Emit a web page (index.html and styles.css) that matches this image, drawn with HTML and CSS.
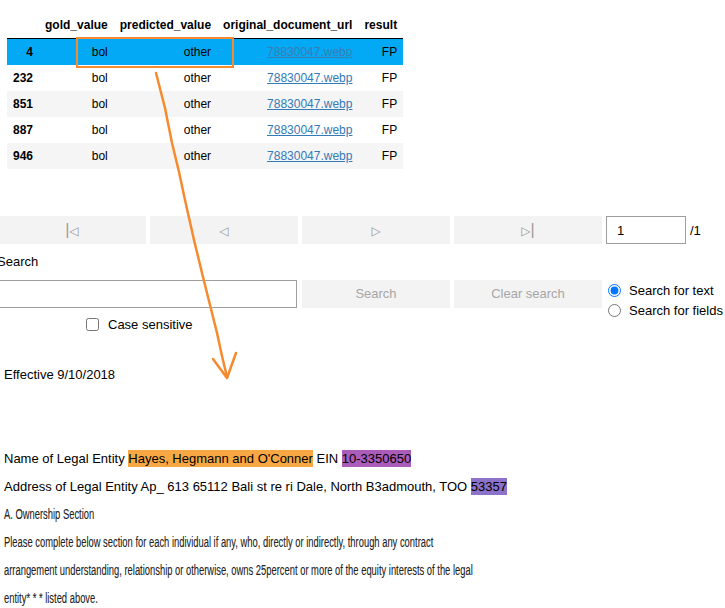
FILE: index.html
```html
<!DOCTYPE html>
<html lang="en">
<head>
    <meta charset="UTF-8">
    <title>Review results</title>
    <link rel="stylesheet" href="styles.css">
</head>
<body>
<div class="page">

    <!-- results table -->
    <table class="results">
        <thead>
        <tr><th></th><th>gold_value</th><th>predicted_value</th><th>original_document_url</th><th>result</th></tr>
        </thead>
        <tbody>
        <tr class="selected"><th>4</th><td>bol</td><td>other</td><td><a href="#">78830047.webp</a></td><td>FP</td></tr>
        <tr><th>232</th><td>bol</td><td>other</td><td><a href="#">78830047.webp</a></td><td>FP</td></tr>
        <tr><th>851</th><td>bol</td><td>other</td><td><a href="#">78830047.webp</a></td><td>FP</td></tr>
        <tr><th>887</th><td>bol</td><td>other</td><td><a href="#">78830047.webp</a></td><td>FP</td></tr>
        <tr><th>946</th><td>bol</td><td>other</td><td><a href="#">78830047.webp</a></td><td>FP</td></tr>
        </tbody>
    </table>

    <!-- paging -->
    <div class="pager">
        <button class="btn" disabled><span class="bar">|</span><span class="tri">&#9665;</span></button>
        <button class="btn" disabled><span class="tri">&#9665;</span></button>
        <button class="btn" disabled><span class="tri">&#9655;</span></button>
        <button class="btn" disabled><span class="tri">&#9655;</span><span class="bar">|</span></button>
        <input class="page-input" type="text" value="1">
        <span class="page-total">/1</span>
    </div>

    <!-- search -->
    <div class="search-label">Search</div>
    <div class="search-row">
        <input class="search-input" type="text">
        <button class="btn" disabled>Search</button>
        <button class="btn" disabled>Clear search</button>
        <div class="mode">
            <label><input type="radio" name="mode" checked>Search for text</label>
            <label><input type="radio" name="mode">Search for fields</label>
        </div>
    </div>
    <div class="case-row">
        <label><input type="checkbox">Case sensitive</label>
    </div>

    <!-- document text -->
    <div class="doc">
        <div class="line">Effective 9/10/2018</div>
        <div class="line"></div>
        <div class="line"></div>
        <div class="line">Name of Legal Entity <span class="hl hl-name">Hayes, Hegmann and O'Conner</span> EIN <span class="hl hl-ein">10-3350650</span></div>
        <div class="line">Address of Legal Entity Ap_ 613 65112 Bali st re ri Dale, North B3admouth, TOO <span class="hl hl-zip">53357</span></div>
        <div class="line"><span class="narrow">A. Ownership Section</span></div>
        <div class="line"><span class="narrow">Please complete below section for each individual if any, who, directly or indirectly, through any contract</span></div>
        <div class="line"><span class="narrow">arrangement understanding, relationship or otherwise, owns 25percent or more of the equity interests of the legal</span></div>
        <div class="line"><span class="narrow">entity* * * listed above.</span></div>
    </div>

    <!-- hand drawn annotation -->
    <svg class="annot" width="725" height="608" viewBox="0 0 725 608">
        <rect x="77" y="38" width="156" height="29" fill="none" stroke="#f68a2e" stroke-width="2"/>
        <polyline points="156,73 165,108 172,143 179,172 185,200 194,240 203,277 210,305 217,333 222,356 227,377"
                  fill="none" stroke="#f68a2e" stroke-width="2.5" stroke-linecap="round" stroke-linejoin="round"/>
        <polyline points="213,359 227,378 236,353" fill="none" stroke="#f68a2e" stroke-width="2.5"
                  stroke-linecap="round" stroke-linejoin="round"/>
    </svg>
</div>
</body>
</html>
```

FILE: styles.css
```css
body {
    margin: 0;
    font-family: "Liberation Sans", Arial, sans-serif;
    font-size: 13px;
    color: #000;
    background: #fff;
    overflow: hidden;
}
.page {
    position: relative;
    width: 725px;
    height: 608px;
    box-sizing: border-box;
    padding-top: 12px;
}

/* table */
.results {
    margin-left: 7px;
    border-collapse: collapse;
    border-spacing: 0;
    font-size: 12px;
    line-height: 14px;
}
.results th,
.results td {
    padding: 6px;
    text-align: right;
    white-space: nowrap;
}
.results thead th {
    font-weight: bold;
}
.results thead {
    border-bottom: 1px solid #000;
}
.results tbody th {
    font-weight: bold;
}
.results tbody tr:nth-child(odd) {
    background: #f5f5f5;
}
.results tbody tr.selected {
    background: #03a9f4;
}
.results a {
    color: #337ab7;
    text-decoration: underline;
}
.results tr.selected a {
    color: #3b7db2;
}

/* widgets */
.btn {
    width: 148px;
    height: 28px;
    margin: 2px;
    padding: 0 8px;
    border: none;
    background: #f3f3f3;
    color: #a6a6a6;
    font-family: "Liberation Sans", Arial, sans-serif;
    font-size: 13px;
}
.btn .tri {
    font-family: "DejaVu Sans", sans-serif;
    font-size: 12px;
    color: #999;
}
.btn .bar {
    font-size: 16px;
    color: #999;
}
.pager {
    display: flex;
    align-items: center;
    margin: 45px 0 0 -4px;
}
.page-input {
    width: 80px;
    height: 28px;
    box-sizing: border-box;
    margin: 2px;
    padding: 0 10px;
    border: 1px solid #9e9e9e;
    font-family: "Liberation Sans", Arial, sans-serif;
    font-size: 13px;
}
.page-total {
    margin-left: 2px;
}
.search-label {
    height: 28px;
    line-height: 28px;
    margin: 2px 0 2px -3px;
}
.search-row {
    display: flex;
    align-items: flex-start;
    height: 28px;
    margin: 4px 0 2px -2px;
}
.search-input {
    width: 299px;
    height: 28px;
    box-sizing: border-box;
    margin: 0 3px 0 0;
    border: 1px solid #9e9e9e;
}
.search-row .btn {
    margin: 0 2px 0 2px;
    padding-bottom: 2px;
}
.mode {
    display: flex;
    flex-direction: column;
    margin-left: 2px;
}
.mode label {
    display: flex;
    align-items: center;
    height: 20px;
    gap: 8px;
}
.mode input {
    margin: 0 0 0 2px;
    width: 13px;
    height: 13px;
}
.case-row {
    height: 28px;
    margin: 3px 0 2px;
    padding-left: 86px;
}
.case-row label {
    display: flex;
    align-items: center;
    height: 26px;
    gap: 9px;
}
.case-row input {
    margin: 0;
    width: 13px;
    height: 13px;
}

/* document text */
.doc {
    margin-top: 22px;
    padding-left: 4px;
}
.doc .line {
    height: 28px;
    line-height: 28px;
    white-space: nowrap;
}
.hl {
    padding: 1px 0;
}
.hl-name {
    background: #f7a845;
}
.hl-ein {
    background: #ab5cb8;
}
.hl-zip {
    background: #8c72c8;
}
.narrow {
    display: inline-block;
    font-size: 14px;
    color: #222;
    transform: scaleX(0.67);
    transform-origin: left center;
    -webkit-text-stroke: 0.1px #222;
}
.doc .line:nth-child(n+6) {
    margin-top: -1px;
    margin-bottom: 1px;
}

.annot {
    position: absolute;
    top: 0;
    left: 0;
    pointer-events: none;
}
```
